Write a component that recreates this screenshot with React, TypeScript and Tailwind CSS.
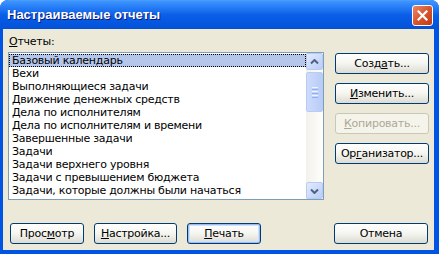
import React from 'react'

const REPORTS = [
  'Базовый календарь',
  'Вехи',
  'Выполняющиеся задачи',
  'Движение денежных средств',
  'Дела по исполнителям',
  'Дела по исполнителям и времени',
  'Завершенные задачи',
  'Задачи',
  'Задачи верхнего уровня',
  'Задачи с превышением бюджета',
  'Задачи, которые должны были начаться',
]

// label with one underlined mnemonic letter
function Mn({ text, at }: { text: string; at: number }) {
  if (at < 0) return <>{text}</>
  return (
    <>
      {text.slice(0, at)}
      <span className="underline underline-offset-[1px]">{text[at]}</span>
      {text.slice(at + 1)}
    </>
  )
}

interface BtnProps {
  text: string
  at?: number
  w: string
  disabled?: boolean
  isDefault?: boolean
}

function XpButton({ text, at = -1, w, disabled = false, isDefault = false }: BtnProps) {
  return (
    <div
      className={`${w} h-[21px] shrink-0 rounded-[3px] border flex items-center justify-center text-[11px] ${
        disabled
          ? 'border-[#c9c7ba] bg-[#f5f4ea] text-[#aca899]'
          : 'border-[#003c74] bg-gradient-to-b from-[#ffffff] via-[#f5f5f0] to-[#dcdbd3] text-black'
      } ${isDefault ? 'shadow-[inset_0_0_0_1px_#9dbcf5,inset_0_0_0_2px_#cee0fb]' : ''}`}
    >
      <span className="leading-none">
        <Mn text={text} at={at} />
      </span>
    </div>
  )
}

function ScrollBtn({ down = false }: { down?: boolean }) {
  return (
    <div className="h-[17px] w-[17px] rounded-[2px] border border-[#b8cbf3] bg-gradient-to-br from-[#e2ebfd] to-[#b9cdf8] flex items-center justify-center">
      <svg width="9" height="6" viewBox="0 0 9 6">
        <path
          d={down ? 'M1 1.5 L4.5 5 L8 1.5' : 'M1 4.5 L4.5 1 L8 4.5'}
          fill="none"
          stroke="#4d6185"
          strokeWidth="2"
        />
      </svg>
    </div>
  )
}

export default function App() {
  return (
    <div
      className="w-[439px] h-[254px] rounded-t-[8px] bg-[#0054e3] flex flex-col overflow-hidden tracking-[-0.25px]"
      style={{ fontFamily: '"DejaVu Sans", sans-serif' }}
    >
      {/* title bar */}
      <div className="h-[29px] shrink-0 flex items-center pl-[7px] pr-[6px] rounded-t-[8px] bg-gradient-to-b from-[#3d95ff] via-[#0a5ee8] to-[#0351d8] border-t border-[#4b9bff]">
        <span
          className="text-white text-[13px] font-bold tracking-normal [text-shadow:1px_1px_0_#0a1a7a]"
          style={{ fontFamily: '"Liberation Sans", Arial, sans-serif' }}
        >
          Настраиваемые отчеты
        </span>
        <div className="ml-auto w-[21px] h-[21px] rounded-[3px] border border-white bg-gradient-to-br from-[#e8866a] via-[#d9552c] to-[#c13b14] flex items-center justify-center">
          <svg width="11" height="11" viewBox="0 0 11 11">
            <path d="M1.5 1.5 L9.5 9.5 M9.5 1.5 L1.5 9.5" stroke="white" strokeWidth="2.2" strokeLinecap="square" />
          </svg>
        </div>
      </div>

      {/* client area */}
      <div className="flex-1 ml-[3px] mr-[5px] mb-[4px] bg-[#ece9d8] flex flex-col text-[11px] text-black">
        <div className="flex">
          <div className="flex flex-col pl-[5px] pt-[6px]">
            <div className="pl-[1px] h-[13px] leading-[13px]">
              <Mn text="Отчеты:" at={0} />
            </div>
            <div className="mt-[4px] w-[316px] h-[148px] border border-[#7f9db9] bg-white flex">
              <div className="flex-1 flex flex-col pt-[1px]">
                {REPORTS.map((r, i) => (
                  <div
                    key={r}
                    className={`h-[13px] leading-[13px] pl-[3px] whitespace-nowrap overflow-hidden ${
                      i === 0 ? 'bg-[#b4c7eb] outline outline-1 outline-dotted outline-offset-[-1px] outline-black' : ''
                    }`}
                  >
                    {r}
                  </div>
                ))}
              </div>
              <div className="w-[17px] bg-gradient-to-r from-[#f3f1ec] to-[#fefefb] flex flex-col">
                <ScrollBtn />
                <div className="mt-[2px] h-[40px] rounded-[2px] border border-[#b8cbf3] bg-gradient-to-r from-[#cddbfc] to-[#b9ccf7] flex flex-col items-center justify-center gap-[1px]">
                  <div className="w-[6px] h-[1px] bg-[#eef4fe]" />
                  <div className="w-[6px] h-[1px] bg-[#8cb0f8]" />
                  <div className="w-[6px] h-[1px] bg-[#eef4fe]" />
                  <div className="w-[6px] h-[1px] bg-[#8cb0f8]" />
                  <div className="w-[6px] h-[1px] bg-[#eef4fe]" />
                  <div className="w-[6px] h-[1px] bg-[#8cb0f8]" />
                </div>
                <div className="flex-1" />
                <ScrollBtn down />
              </div>
            </div>
          </div>
          <div className="ml-[11px] pt-[24px] flex flex-col gap-[9px]">
            <XpButton text="Создать..." at={4} w="w-[94px]" />
            <XpButton text="Изменить..." at={0} w="w-[94px]" />
            <XpButton text="Копировать..." at={0} w="w-[94px]" disabled />
            <XpButton text="Организатор..." at={2} w="w-[94px]" />
          </div>
        </div>

        <div className="mt-auto mb-[6px] flex pl-[7px] pr-[6px]">
          <XpButton text="Просмотр" at={4} w="w-[74px]" />
          <div className="w-[10px]" />
          <XpButton text="Настройка..." at={0} w="w-[83px]" />
          <div className="w-[10px]" />
          <XpButton text="Печать" at={0} w="w-[74px]" isDefault />
          <div className="ml-auto">
            <XpButton text="Отмена" w="w-[94px]" />
          </div>
        </div>
      </div>
    </div>
  )
}
